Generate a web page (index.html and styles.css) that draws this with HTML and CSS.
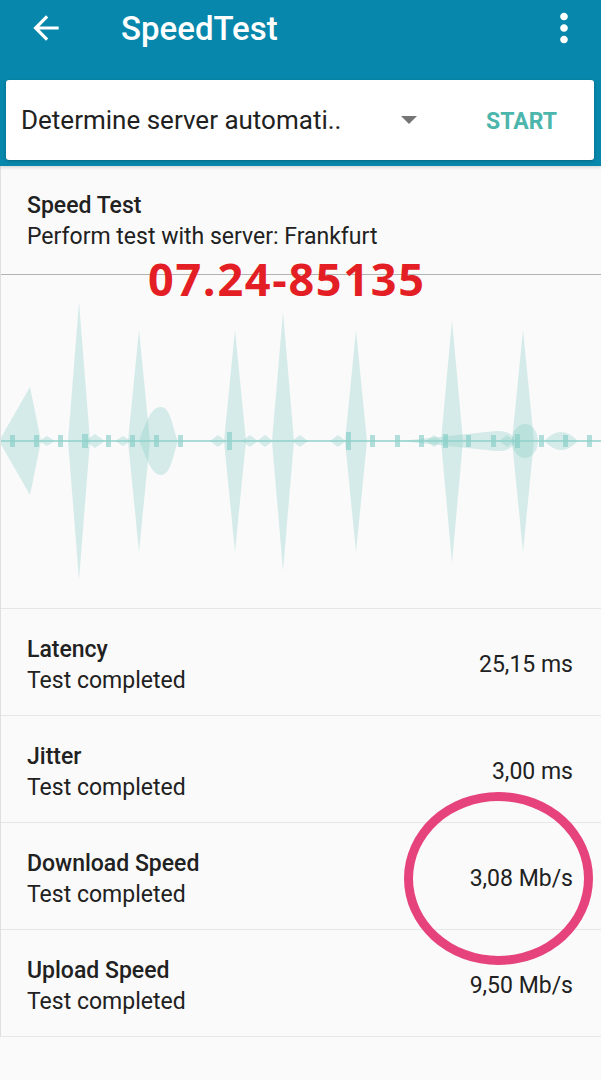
FILE: index.html
```html
<!DOCTYPE html>
<html lang="en">
<head>
    <meta charset="UTF-8">
    <meta name="viewport" content="width=device-width, initial-scale=1.0">
    <title>SpeedTest</title>
    <link rel="stylesheet" href="styles.css">
</head>
<body>

    <header class="appbar">
        <div class="toolbar">
            <svg class="back-icon" viewBox="0 0 24 24" width="38" height="38">
                <path d="M20 11H7.83l5.59-5.59L12 4l-8 8 8 8 1.41-1.41L7.83 13H20v-2z" fill="#fff"/>
            </svg>
            <h1 class="toolbar-title">SpeedTest</h1>
            <svg class="menu-icon" viewBox="0 0 24 24" width="46" height="46">
                <path d="M12 8c1.1 0 2-.9 2-2s-.9-2-2-2-2 .9-2 2 .9 2 2 2zm0 2c-1.1 0-2 .9-2 2s.9 2 2 2 2-.9 2-2-.9-2-2-2zm0 6c-1.1 0-2 .9-2 2s.9 2 2 2 2-.9 2-2-.9-2-2-2z" fill="#fff"/>
            </svg>
        </div>
        <div class="server-card">
            <span class="server-name">Determine server automati..</span>
            <span class="caret"></span>
            <button class="start-btn" type="button">START</button>
        </div>
    </header>

    <main class="content">
        <section class="test-info">
            <p class="item-title">Speed Test</p>
            <p class="item-sub">Perform test with server: Frankfurt</p>
        </section>

        <!-- stamp on top of the screenshot -->
        <div class="stamp">07.24-85135</div>

        <div class="graph">
            <svg viewBox="0 275 601 333" width="601" height="333">
                <g fill="#80cbc4" fill-opacity="0.3">
                    <path d="M29,387 L40,441 L29,495 L-2,441 Z"/>
                    <path d="M78,302 L89,441 L78,580 L67,441 Z"/>
                    <path d="M138,330 L149,441 L138,552 L127,441 Z"/>
                    <path d="M234,330 L245,441 L234,552 L223,441 Z"/>
                    <path d="M282,312 L293,441 L282,571 L271,441 Z"/>
                    <path d="M355,330 L366,441 L355,552 L344,441 Z"/>
                    <path d="M451,320 L462,441 L451,563 L440,441 Z"/>
                    <path d="M522,330 L533,441 L522,552 L511,441 Z"/>
                    <path d="M138,441 C146,420 150,407 160,407 C170,407 172,430 177,441 C172,455 170,475 160,475 C150,475 146,458 138,441 Z"/>
                    <path d="M399,441 L495,431 Q510,430 515,441 Q510,452 495,451 Z"/>
                    <ellipse cx="524" cy="441" rx="13" ry="17"/>
                    <path d="M543,441 Q552,432 560,432 Q568,432 577,441 Q568,450 560,450 Q552,450 543,441 Z"/>
                    <path d="M38,441 L46,436 L54,441 L46,446 Z"/>
                    <path d="M84,441 L94,434 L104,441 L94,448 Z"/>
                    <path d="M114,441 L122,436 L130,441 L122,446 Z"/>
                    <path d="M209,441 L217,435 L225,441 L217,447 Z"/>
                    <path d="M241,441 L249,435 L257,441 L249,447 Z"/>
                    <path d="M256,441 L264,435 L272,441 L264,447 Z"/>
                    <path d="M291,441 L299,435 L307,441 L299,447 Z"/>
                    <path d="M329,441 L337,435 L345,441 L337,447 Z"/>
                    <path d="M425,441 L433,435 L441,441 L433,447 Z"/>
                    <path d="M498,441 L506,435 L514,441 L506,447 Z"/>
                </g>
                <g fill="#80cbc4" fill-opacity="0.6">
                    <rect x="9" y="435" width="5" height="12"/>
                    <rect x="33" y="435" width="5" height="12"/>
                    <rect x="57" y="435" width="5" height="12"/>
                    <rect x="81" y="434" width="6" height="14"/>
                    <rect x="105" y="435" width="5" height="12"/>
                    <rect x="129" y="435" width="5" height="12"/>
                    <rect x="153" y="435" width="5" height="12"/>
                    <rect x="177" y="435" width="5" height="12"/>
                    <rect x="226" y="432" width="5" height="18"/>
                    <rect x="345" y="432" width="5" height="18"/>
                    <rect x="369" y="435" width="5" height="12"/>
                    <rect x="394" y="435" width="5" height="12"/>
                    <rect x="418" y="435" width="5" height="12"/>
                    <rect x="442" y="434" width="5" height="14"/>
                    <rect x="465" y="435" width="5" height="12"/>
                    <rect x="490" y="435" width="5" height="12"/>
                    <rect x="514" y="434" width="5" height="14"/>
                    <rect x="538" y="435" width="5" height="12"/>
                    <rect x="562" y="435" width="5" height="12"/>
                    <rect x="586" y="435" width="5" height="12"/>
                </g>
                <line x1="0" y1="441" x2="601" y2="441" stroke="#8fd0ca" stroke-width="1.5"/>
            </svg>
        </div>

        <ul class="results">
            <li class="result-row">
                <div class="result-text">
                    <p class="item-title">Latency</p>
                    <p class="item-sub">Test completed</p>
                </div>
                <span class="result-value">25,15 ms</span>
            </li>
            <li class="result-row">
                <div class="result-text">
                    <p class="item-title">Jitter</p>
                    <p class="item-sub">Test completed</p>
                </div>
                <span class="result-value">3,00 ms</span>
            </li>
            <li class="result-row">
                <div class="result-text">
                    <p class="item-title">Download Speed</p>
                    <p class="item-sub">Test completed</p>
                </div>
                <span class="result-value">3,08 Mb/s</span>
            </li>
            <li class="result-row">
                <div class="result-text">
                    <p class="item-title">Upload Speed</p>
                    <p class="item-sub">Test completed</p>
                </div>
                <span class="result-value">9,50 Mb/s</span>
            </li>
        </ul>

        <!-- hand drawn mark around the download value -->
        <div class="mark"></div>
    </main>

</body>
</html>
```

FILE: styles.css
```css
body {
    margin: 0;
    padding: 0;
    width: 601px;
    min-height: 1080px;
    background-color: #fafafa;
    font-family: 'Roboto', 'Noto Sans', sans-serif;
    color: #212121;
}
p, h1, ul {
    margin: 0;
    padding: 0;
}
.appbar {
    background-color: #0787ab;
    padding-bottom: 6px;
    box-shadow: 0 2px 3px rgba(0, 0, 0, 0.12);
    position: relative;
    z-index: 1;
}
.toolbar {
    display: flex;
    align-items: center;
    height: 56px;
    padding-left: 27px;
    padding-right: 14px;
}
.toolbar-title {
    flex: 1;
    margin-left: 56px;
    font-size: 33px;
    font-weight: 500;
    color: #fff;
}
.server-card {
    display: flex;
    align-items: center;
    height: 80px;
    margin: 24px 7px 0 6px;
    padding: 0 37px 0 15px;
    background-color: #fff;
    border-radius: 3px;
    box-shadow: 0 1px 3px rgba(0, 0, 0, 0.25);
}
.server-name {
    flex: 1;
    font-size: 26px;
    color: #212121;
}
.caret {
    width: 0;
    height: 0;
    border-left: 8px solid transparent;
    border-right: 8px solid transparent;
    border-top: 8px solid #757575;
    margin-right: 69px;
}
.start-btn {
    padding: 0;
    margin-top: 3px;
    border: none;
    background: none;
    font-family: 'Roboto', sans-serif;
    font-size: 23px;
    font-weight: 700;
    color: #4db6ac;
}
.content {
    position: relative;
    border-left: 1px solid #e0e0e0;
}
.test-info {
    padding: 24px 27px 22px 26px;
    border-bottom: 1px solid #b3b3b3;
}
.item-title {
    font-size: 23px;
    font-weight: 500;
    line-height: 31px;
}
.item-sub {
    font-size: 23px;
    line-height: 31px;
}
.stamp {
    position: absolute;
    left: 147px;
    top: 88px;
    font-family: 'Open Sans', sans-serif;
    font-size: 45px;
    font-weight: 700;
    letter-spacing: 1.7px;
    color: #e31e24;
    line-height: 50px;
}
.graph {
    height: 333px;
    overflow: hidden;
}
.graph svg {
    display: block;
}
.results {
    list-style: none;
    border-top: 1px solid #e6e6e6;
}
.result-row {
    display: flex;
    justify-content: space-between;
    align-items: center;
    box-sizing: border-box;
    height: 107px;
    padding: 0 28px 0 26px;
    border-bottom: 1px solid #e6e6e6;
}
.result-text {
    padding-top: 6px;
}
.result-value {
    font-size: 23px;
    padding-top: 4px;
}
.mark {
    position: absolute;
    left: 403px;
    top: 626px;
    width: 189px;
    height: 173px;
    box-sizing: border-box;
    border: 9px solid #e6427b;
    border-radius: 50%;
}
```
